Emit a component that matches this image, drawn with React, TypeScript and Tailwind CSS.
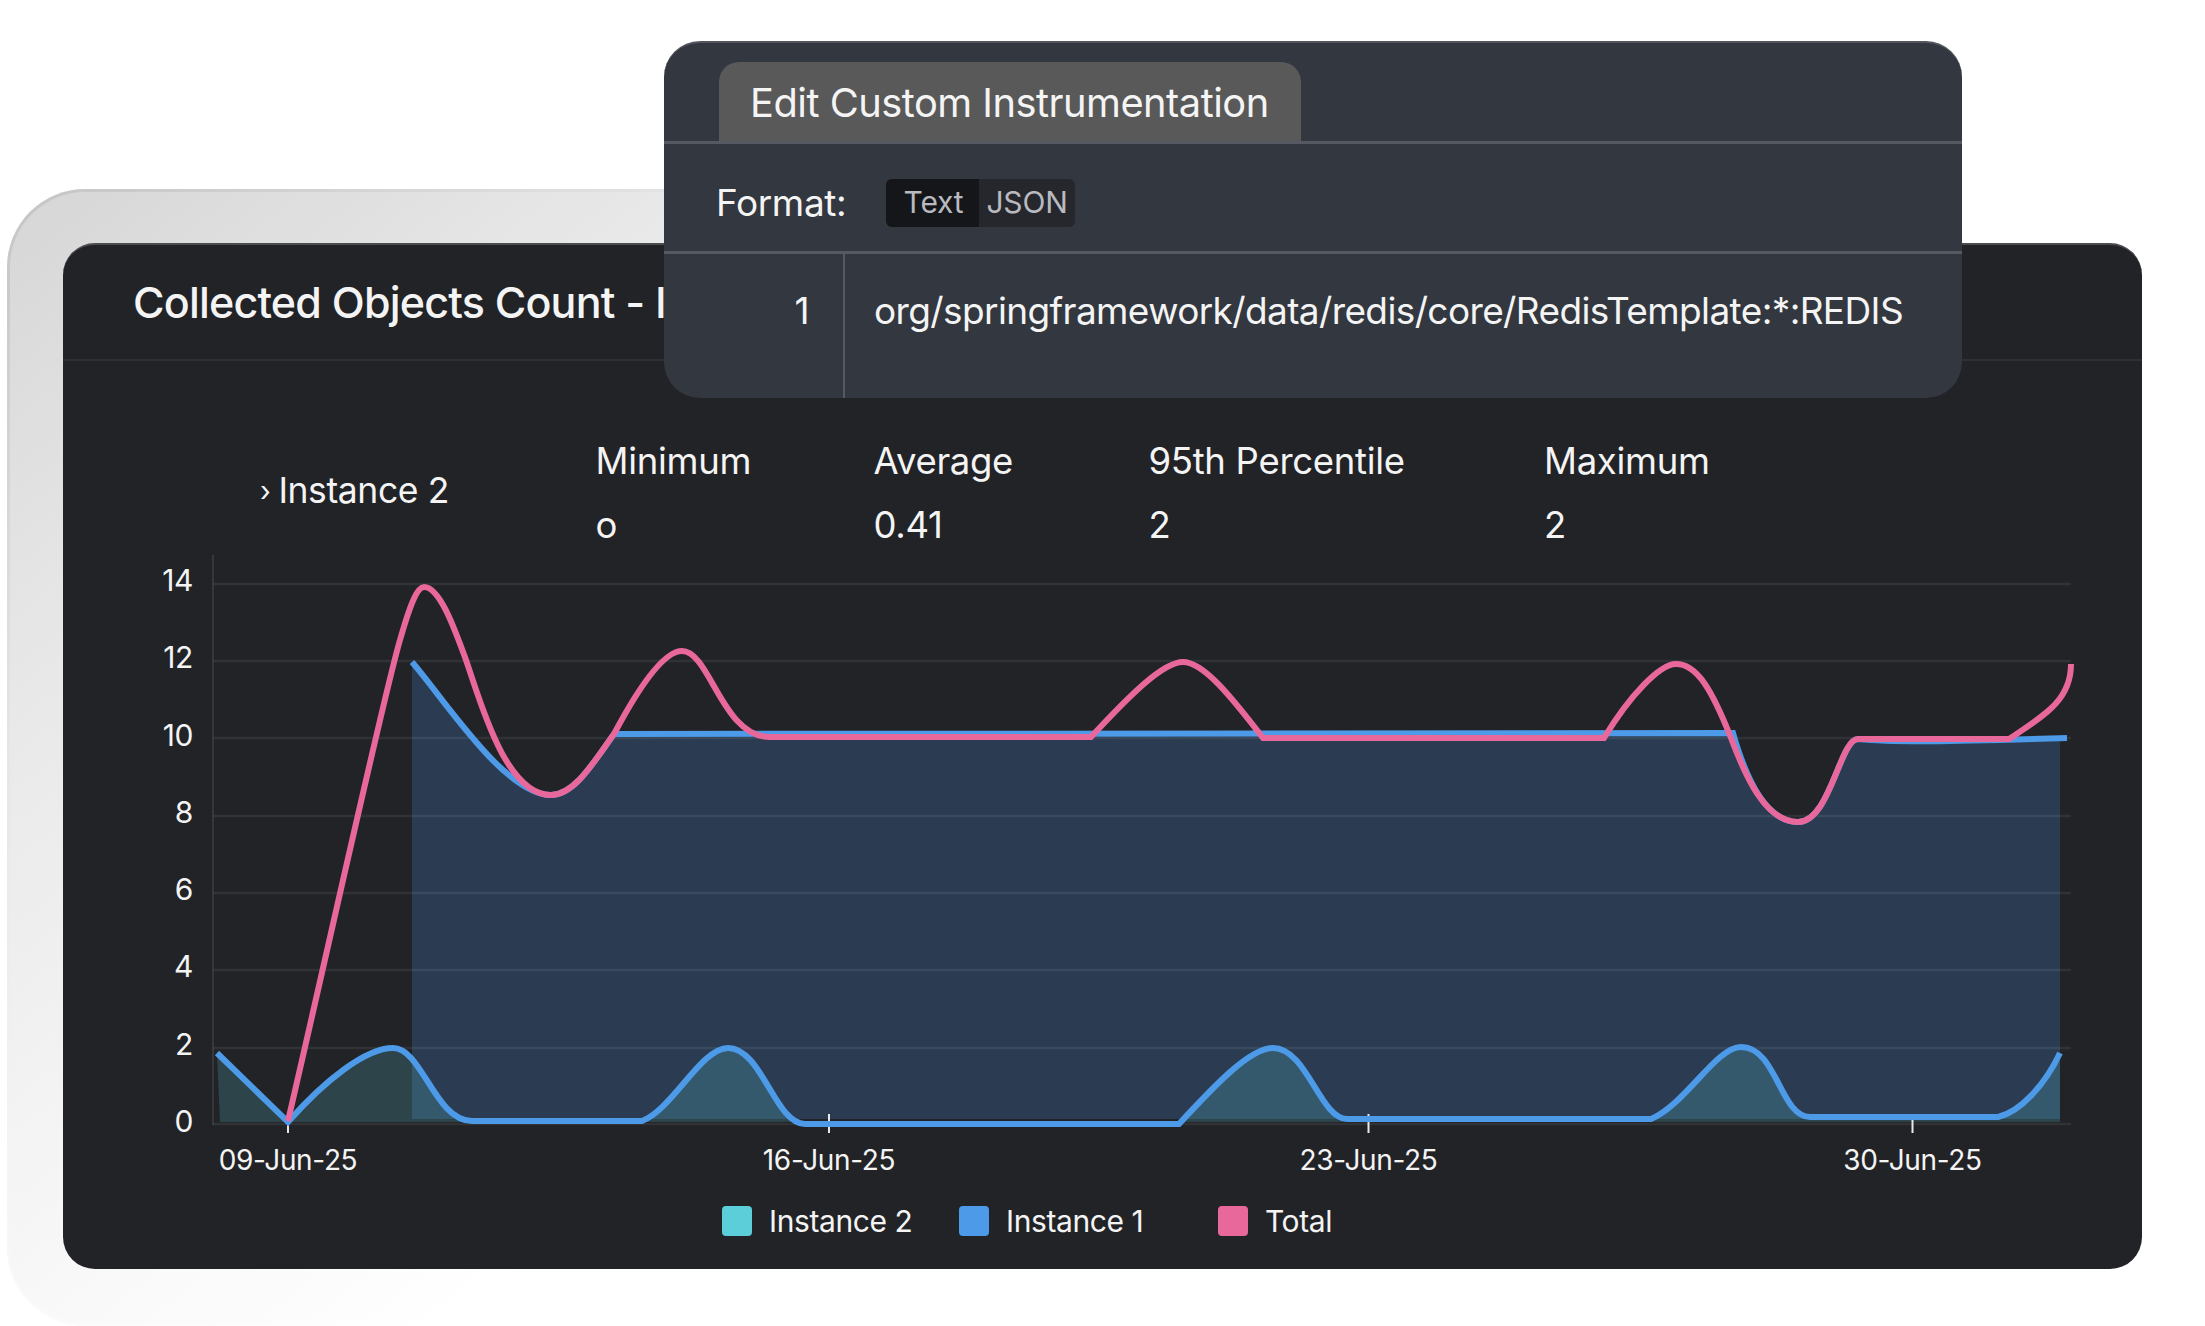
const stats = [
  { label: "Minimum", value: "o", width: "w-[278px]" },
  { label: "Average", value: "0.41", width: "w-[275px]" },
  { label: "95th Percentile", value: "2", width: "w-[395.5px]" },
  { label: "Maximum", value: "2", width: "w-[200px]" },
];

const yLabels = ["14", "12", "10", "8", "6", "4", "2", "0"];

const xLabels = [
  { text: "09-Jun-25", margin: "" },
  { text: "16-Jun-25", margin: "ml-[341px]" },
  { text: "23-Jun-25", margin: "ml-[339.5px]" },
  { text: "30-Jun-25", margin: "ml-[344px]" },
];

const legend = [
  { name: "Instance 2", color: "bg-[#5bced9]", width: "w-[237px]" },
  { name: "Instance 1", color: "bg-[#4d9ae8]", width: "w-[259px]" },
  { name: "Total", color: "bg-[#e9689b]", width: "w-[150px]" },
];

const gridY = [584, 661, 738, 816, 893, 970, 1048, 1124];
const ticks = [
  [288, 1122],
  [829, 1114],
  [1368.5, 1114],
  [1912.5, 1114],
];

const blueTop =
  "M412 662C445 700 505 795 551 795C575 795 595 760 614 734L1733 733C1745 775 1765 822 1798 822C1830 822 1840 739 1858 739C1900 743 1960 741 2067 738";
const blueLow =
  "M217 1053L288 1122C325 1080 366 1048 393 1048C422 1048 435 1121 472 1121L642 1121C672 1110 701 1048 728 1048C762 1048 775 1124 805 1124L1179 1124C1215 1085 1250 1048 1273 1048C1307 1048 1320 1119 1347 1119L1651 1119C1685 1105 1716 1047 1741 1047C1777 1047 1780 1117 1810 1117L1998 1117C2020 1112 2045 1085 2060 1053";
const pink =
  "M288 1121C330 940 385 690 400 640C410 605 417 587 424 587C440 587 455 630 466 660C480 700 505 795 551 795C575 795 595 760 614 734C640 685 664 651 682 651C710 651 722 737 770 737L1091 737C1130 695 1163 662 1183 662C1203 662 1230 695 1263 738L1604 738C1630 695 1660 664 1676 664C1697 664 1712 690 1731 738C1745 775 1765 822 1798 822C1830 822 1840 739 1858 739L2009 739C2045 715 2071 700 2071 664";

const Chart = () => (
  <svg viewBox="205 555 1875 585" className="block h-[585px] w-[1875px]">
    <path d={`${blueTop}L2060 738L2060 1119L412 1119Z`} fill="#2b3c52" />
    <path d={`${blueLow}L2060 1122L220 1122Z`} fill="#5bced9" fillOpacity="0.2" />
    <path d="M213 555V1125" stroke="#36373a" strokeWidth="2" />
    {gridY.map((y) => (
      <path key={y} d={`M213 ${y}H2071`} stroke="#fff" strokeOpacity="0.07" strokeWidth="2.5" />
    ))}
    {ticks.map(([x, y]) => (
      <path key={x} d={`M${x} ${y}V1133`} stroke="#e8e8e8" strokeWidth="2" />
    ))}
    <path d={blueTop} fill="none" stroke="#4d9ae8" strokeWidth="6" />
    <path d={blueLow} fill="none" stroke="#4d9ae8" strokeWidth="6" />
    <path d={pink} fill="none" stroke="#e9689b" strokeWidth="6" />
  </svg>
);

const App = () => {
  return (
    <div className="relative h-[1326px] w-[2205px] overflow-hidden bg-white pl-[7px] pt-[189px] font-[family-name:Inter,sans-serif] text-[#f4f4f4]">
      <div className="h-[1137px] w-[2190px] rounded-[78px] bg-[linear-gradient(142deg,#c4c4c4_0%,#e6e6e6_20%,#fafafa_40%,#ffffff_52%)] p-[3px]">
        <div className="h-full w-full rounded-[75px] bg-[linear-gradient(142deg,#d6d6d6_0%,#e8e8e8_18%,#f8f8f8_40%,#ffffff_52%)] pl-[53px] pt-[51px]">
          <div className="h-[1026px] w-[2079px] rounded-[32px] border-t-2 border-[#4b4c50] bg-[#222327]">
            <div className="flex h-[116px] items-center border-b-2 border-[#2e2f33] pl-[70px] text-[43px] font-medium tracking-[-0.8px]">
              Collected Objects Count - I
            </div>
            <div className="flex h-[194px] items-start pl-[197px] pt-[79px]">
              <div className="flex h-[102px] w-[335.5px] items-center text-[35.5px] tracking-[-0.4px]">
                <span className="mr-[8px] text-[28px]">›</span>
                Instance 2
              </div>
              {stats.map((s) => (
                <div key={s.label} className={`${s.width} flex flex-col gap-[22px] text-[36.5px] leading-[42px] tracking-[-0.3px]`}>
                  <span>{s.label}</span>
                  <span>{s.value}</span>
                </div>
              ))}
            </div>
            <div className="flex pl-[67px]">
              <div className="flex h-[585px] w-[63px] flex-col items-end gap-[43.3px] pt-[8px] text-[30px] leading-[34px] tracking-[-0.4px]">
                {yLabels.map((l) => (
                  <span key={l}>{l}</span>
                ))}
              </div>
              <div className="ml-[12px]">
                <Chart />
              </div>
            </div>
            <div className="mt-[3px] flex pl-[125px] text-[28px] leading-[34px] tracking-[-0.35px]">
              {xLabels.map((l) => (
                <span key={l.text} className={`${l.margin} w-[200px] text-center`}>
                  {l.text}
                </span>
              ))}
            </div>
            <div className="mt-[29px] flex pl-[659px] text-[30px] tracking-[-0.4px]">
              {legend.map((l) => (
                <div key={l.name} className={`${l.width} flex h-[30px] items-center gap-[17px]`}>
                  <span className={`${l.color} h-[30px] w-[30px] rounded-[4px]`} />
                  <span>{l.name}</span>
                </div>
              ))}
            </div>
          </div>
        </div>
      </div>
      <div className="absolute left-[664px] top-[41px] h-[357px] w-[1298px] overflow-hidden rounded-[36px] border-t-2 border-[#53565c] bg-[#33373f]">
        <div className="flex h-[101px] items-end border-b-[3px] border-[#555962] pl-[55px]">
          <div className="flex h-[79px] w-[582px] items-center rounded-t-[20px] bg-[#595959] pl-[31px] pt-[2px] text-[39.8px] tracking-[-0.5px]">
            Edit Custom Instrumentation
          </div>
        </div>
        <div className="flex h-[110px] items-center border-b-[3px] border-[#555962] pl-[52px] pt-[10px] text-[37px] tracking-[-0.4px]">
          <span className="w-[170px]">Format:</span>
          <div className="flex h-[48px] w-[189px] overflow-hidden rounded-[6px] bg-[#25272c] text-[30px] tracking-[-0.2px] text-[#b9bac0]">
            <span className="flex w-[93px] items-center justify-center bg-[#15161a] pl-[2px]">Text</span>
            <span className="flex flex-1 items-center justify-center">JSON</span>
          </div>
        </div>
        <div className="flex h-full text-[37px] tracking-[-0.62px]">
          <div className="w-[181px] border-r-2 border-[#555962] pr-[34px] pt-[29px] text-right">1</div>
          <div className="pl-[29px] pt-[29px]">org/springframework/data/redis/core/RedisTemplate:*:REDIS</div>
        </div>
      </div>
    </div>
  );
};

export default App;
